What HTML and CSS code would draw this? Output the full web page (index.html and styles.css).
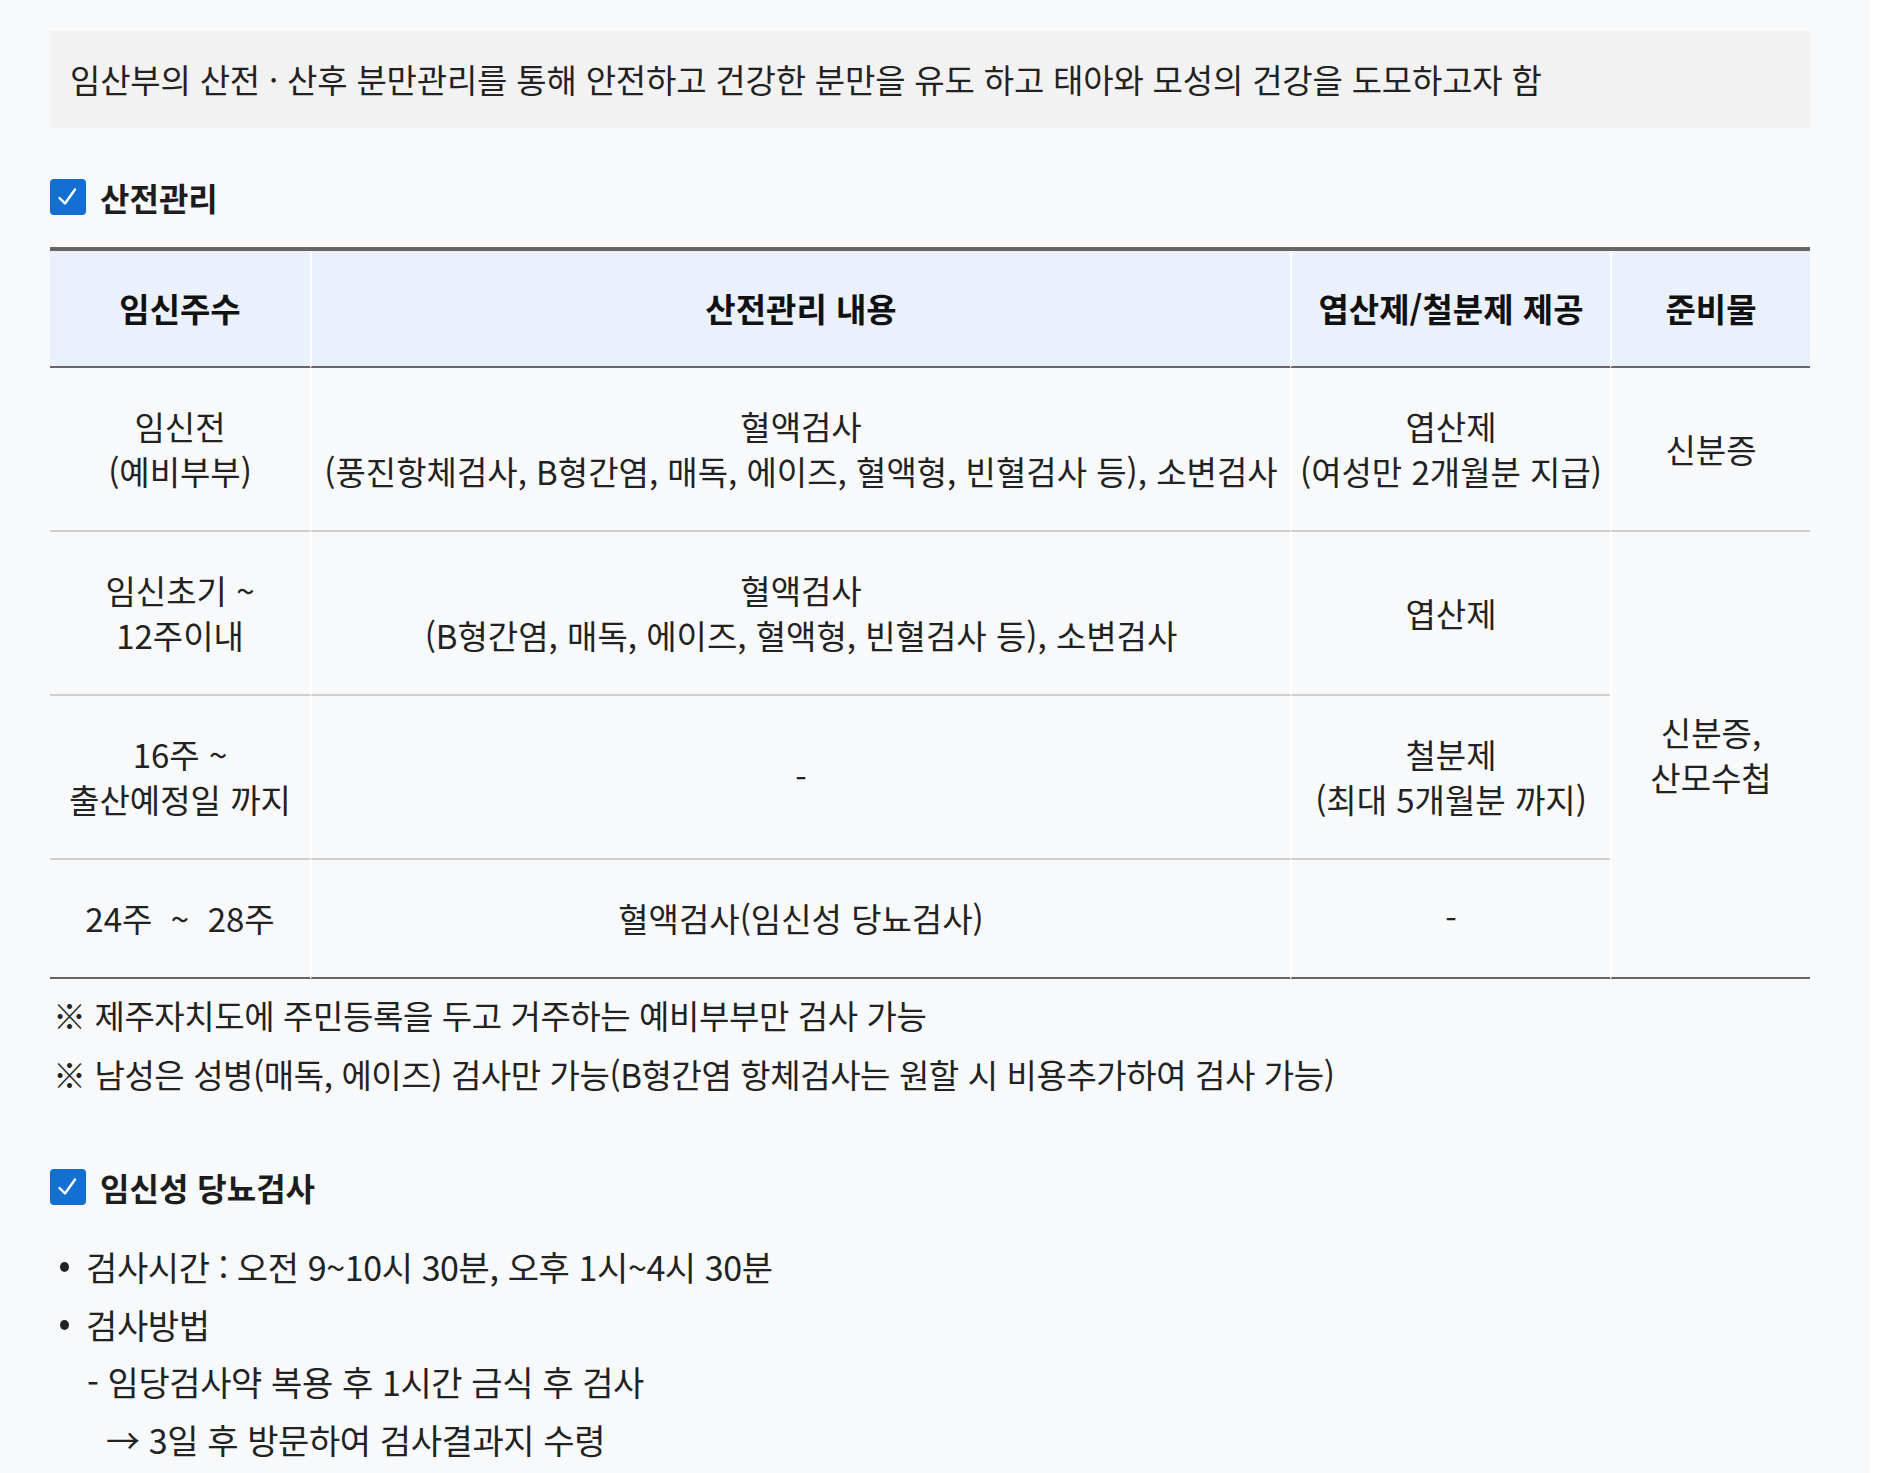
FILE: index.html
```
<!DOCTYPE html>
<html lang="ko">
<head>
    <meta charset="UTF-8">
    <meta name="viewport" content="width=device-width, initial-scale=1.0">
    <title>산전관리</title>
    <link rel="stylesheet" href="styles.css">
</head>
<body>

<div class="page">

    <!-- 사업목적 -->
    <div class="intro">임산부의 산전 · 산후 분만관리를 통해 안전하고 건강한 분만을 유도 하고 태아와 모성의 건강을 도모하고자 함</div>

    <h3 class="sec-title first">
        <span class="chk"><svg width="36" height="36" viewBox="0 0 36 36"><path d="M9.5 19l5.5 5.5 10-14" fill="none" stroke="#fff" stroke-width="2.4" stroke-linecap="round" stroke-linejoin="round"/></svg></span>
        산전관리
    </h3>

    <table class="care-table">
        <colgroup>
            <col class="c1">
            <col class="c2">
            <col class="c3">
            <col class="c4">
        </colgroup>
        <thead>
            <tr>
                <th>임신주수</th>
                <th>산전관리 내용</th>
                <th>엽산제/철분제 제공</th>
                <th>준비물</th>
            </tr>
        </thead>
        <tbody>
            <tr>
                <td>임신전<br>(예비부부)</td>
                <td>혈액검사<br>(풍진항체검사, B형간염, 매독, 에이즈, 혈액형, 빈혈검사 등), 소변검사</td>
                <td>엽산제<br>(여성만 2개월분 지급)</td>
                <td>신분증</td>
            </tr>
            <tr>
                <td>임신초기 ~<br>12주이내</td>
                <td>혈액검사<br>(B형간염, 매독, 에이즈, 혈액형, 빈혈검사 등), 소변검사</td>
                <td>엽산제</td>
                <td rowspan="3" class="last">신분증,<br>산모수첩</td>
            </tr>
            <tr>
                <td>16주 ~<br>출산예정일 까지</td>
                <td>-</td>
                <td>철분제<br>(최대 5개월분 까지)</td>
            </tr>
            <tr class="last">
                <td>24주 &nbsp;~&nbsp; 28주</td>
                <td>혈액검사(임신성 당뇨검사)</td>
                <td>-</td>
            </tr>
        </tbody>
    </table>

    <p class="note">※ 제주자치도에 주민등록을 두고 거주하는 예비부부만 검사 가능</p>
    <p class="note">※ 남성은 성병(매독, 에이즈) 검사만 가능(B형간염 항체검사는 원할 시 비용추가하여 검사 가능)</p>

    <h3 class="sec-title second">
        <span class="chk"><svg width="36" height="36" viewBox="0 0 36 36"><path d="M9.5 19l5.5 5.5 10-14" fill="none" stroke="#fff" stroke-width="2.4" stroke-linecap="round" stroke-linejoin="round"/></svg></span>
        임신성 당뇨검사
    </h3>

    <ul class="info-list">
        <li>검사시간 : 오전 9~10시 30분, 오후 1시~4시 30분</li>
        <li>검사방법
            <p class="sub">- 임당검사약 복용 후 1시간 금식 후 검사</p>
            <p class="sub arrow">→ 3일 후 방문하여 검사결과지 수령</p>
        </li>
    </ul>

</div>

</body>
</html>
```

FILE: styles.css
```
body {
    margin: 0;
    background: #fff;
    font-family: "Noto Sans CJK KR", "Noto Sans", sans-serif;
    color: #222;
}
.page {
    width: 1870px;
    min-height: 1473px;
    box-sizing: border-box;
    padding: 31px 60px 0 50px;
    background: #f8f9fb;
    font-size: 33px;
}
.intro {
    background: #f2f2f2;
    height: 97px;
    line-height: 97px;
    padding-left: 20px;
    letter-spacing: -0.2px;
}
.sec-title {
    display: flex;
    align-items: center;
    margin: 0;
    height: 36px;
    font-size: 32px;
    font-weight: bold;
    color: #1d1d1d;
}
.sec-title.first {
    margin-top: 51px;
    margin-bottom: 32px;
}
.sec-title.second {
    margin-top: 65px;
}
.chk {
    width: 36px;
    height: 36px;
    border-radius: 4px;
    background: #136fd1;
    margin-right: 14px;
    display: flex;
}
.care-table {
    width: 1760px;
    border-collapse: separate;
    border-spacing: 0;
    border-top: 4px solid #666;
    table-layout: fixed;
    line-height: 45px;
}
.care-table .c1 { width: 260px; }
.care-table .c2 { width: 980px; }
.care-table .c3 { width: 320px; }
.care-table .c4 { width: 200px; }
.care-table th,
.care-table td {
    text-align: center;
    padding: 35px 0;
    white-space: nowrap;
    border-left: 2px solid #fff;
}
.care-table th:first-child,
.care-table td:first-child {
    border-left: none;
}
.care-table th {
    background: #eaf1fc;
    border-bottom: 2px solid #666;
    font-weight: bold;
    color: #111;
}
.care-table td {
    border-bottom: 2px solid #cfcfcf;
    padding: 36px 0;
}
.care-table tr.last td,
.care-table td.last {
    border-bottom: 2px solid #666;
}
.note {
    margin: 0;
    line-height: 59px;
    padding-left: 3px;
    letter-spacing: -0.4px;
}
.note:first-of-type {
    margin-top: 7px;
}
.info-list {
    list-style: none;
    margin: 33px 0 0;
    padding: 0;
    font-size: 34px;
    line-height: 57.5px;
    letter-spacing: -0.4px;
}
.info-list li {
    position: relative;
    padding-left: 36px;
}
.info-list li::before {
    content: "";
    position: absolute;
    left: 10px;
    top: 24px;
    width: 9px;
    height: 10px;
    border-radius: 50%;
    background: #222;
}
.info-list .sub {
    margin: 0 0 0 1px;
}
.info-list .sub.arrow {
    margin-left: 20px;
}
```
